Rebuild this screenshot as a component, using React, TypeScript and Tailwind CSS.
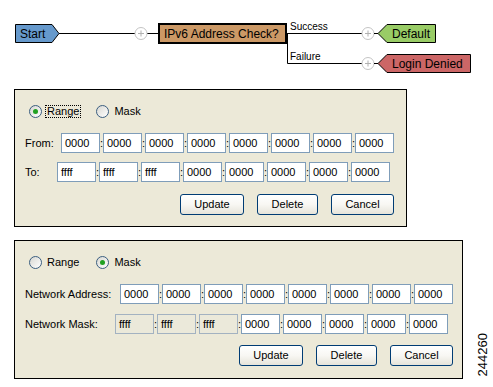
import React from "react";

const font = { fontFamily: '"Liberation Sans", Arial, sans-serif' };

function PlusCircle({ cx, cy }: { cx: number; cy: number }) {
    return (
        <g>
            <circle cx={cx} cy={cy} r={6} fill="white" stroke="#c4c4c4" strokeWidth={1} />
            <line x1={cx - 3} y1={cy} x2={cx + 3} y2={cy} stroke="#b0b0b0" strokeWidth={1} />
            <line x1={cx} y1={cy - 3} x2={cx} y2={cy + 3} stroke="#b0b0b0" strokeWidth={1} />
        </g>
    );
}

function Diagram() {
    return (
        <svg width="493" height="80" className="block" style={font}>
            <line x1={59} y1={33.5} x2={135} y2={33.5} stroke="black" />
            <line x1={147} y1={33.5} x2={158} y2={33.5} stroke="black" />
            <polygon points="15.5,24.5 52,24.5 59,33.5 52,42.5 15.5,42.5" fill="#6699cc" stroke="black" />
            <text x={20} y={38} fontSize={12} fill="black">Start</text>
            <PlusCircle cx={141} cy={33.5} />
            <rect x={159} y={24} width={127} height={19} fill="#cc9966" stroke="black" strokeWidth={2} />
            <text x={164} y={38} fontSize={12} fill="black">IPv6 Address Check?</text>
            <polyline points="287,33.5 362,33.5" fill="none" stroke="black" />
            <polyline points="287.5,33 287.5,63.5 362,63.5" fill="none" stroke="black" />
            <text x={290} y={30} fontSize={10} fill="black">Success</text>
            <text x={290} y={60} fontSize={10} fill="black">Failure</text>
            <PlusCircle cx={368} cy={33.5} />
            <PlusCircle cx={368} cy={63.5} />
            <line x1={374} y1={33.5} x2={378} y2={33.5} stroke="black" />
            <line x1={374} y1={63.5} x2={378} y2={63.5} stroke="black" />
            <polygon points="378,33.5 387,24.5 435.5,24.5 435.5,42.5 387,42.5" fill="#99cc66" stroke="black" />
            <text x={392} y={38} fontSize={12} fill="black">Default</text>
            <polygon points="378,63.5 387,54.5 470.5,54.5 470.5,72.5 387,72.5" fill="#cc6666" stroke="black" />
            <text x={392} y={68} fontSize={12} fill="black">Login Denied</text>
        </svg>
    );
}

function Radio({ label, checked, focused }: { label: string; checked?: boolean; focused?: boolean }) {
    return (
        <div className="flex items-center">
            <div className="w-[13px] h-[13px] rounded-full border border-[#3b5e80] bg-gradient-to-br from-[#d8d8d2] to-white flex items-center justify-center">
                {checked && <div className="w-[5px] h-[5px] rounded-full bg-[#21a121]" />}
            </div>
            <span
                className={
                    focused
                        ? "ml-[3px] px-[1px] leading-[11px] border border-dotted border-black text-[11px] text-black"
                        : "ml-[4px] leading-[11px] border border-transparent text-[11px] text-black"
                }
            >
                {label}
            </span>
        </div>
    );
}

function Octets({ values, disabled = 0 }: { values: string[]; disabled?: number }) {
    return (
        <div className="flex">
            {values.map((v, i) => (
                <div key={i} className="flex">
                    {i > 0 && (
                        <span className="w-[3px] text-[11px] leading-[20px] text-black flex justify-center">:</span>
                    )}
                    <div
                        className={
                            i < disabled
                                ? "w-[39px] h-[20px] border border-[#a3b2c1] bg-[#ebe9da] text-[11px] leading-[18px] pl-[3px] text-black"
                                : "w-[39px] h-[20px] border border-[#7f9db9] bg-white text-[11px] leading-[18px] pl-[3px] text-black"
                        }
                    >
                        {v}
                    </div>
                </div>
            ))}
        </div>
    );
}

function Btn({ label, w }: { label: string; w: string }) {
    return (
        <div
            className={`${w} h-[21px] rounded-[3px] border border-[#003c74] bg-gradient-to-b from-white via-[#f8f7f3] to-[#e6e4da] flex items-center justify-center text-[11px] text-black`}
        >
            {label}
        </div>
    );
}

function Buttons() {
    return (
        <div className="flex gap-[13px] justify-end">
            <Btn label="Update" w="w-[64px]" />
            <Btn label="Delete" w="w-[61px]" />
            <Btn label="Cancel" w="w-[63px]" />
        </div>
    );
}

const zeros = ["0000", "0000", "0000", "0000", "0000", "0000", "0000", "0000"];
const maskVals = ["ffff", "ffff", "ffff", "0000", "0000", "0000", "0000", "0000"];

export default function App() {
    return (
        <div className="w-[493px] h-[387px] bg-white overflow-hidden" style={font}>
            <Diagram />

            <div className="ml-[14px] mt-[9px] w-[393px] h-[138px] border border-black bg-[#ece9d8] flex flex-col pt-[15px] pl-[14px] pr-[12px]">
                <div className="flex items-center h-[13px]">
                    <Radio label="Range" checked focused />
                    <div className="ml-[15px]">
                        <Radio label="Mask" />
                    </div>
                </div>
                <div className="flex items-center mt-[15px] -ml-[4px]">
                    <span className="w-[37px] text-[11px] text-black">From:</span>
                    <Octets values={zeros} />
                </div>
                <div className="flex items-center mt-[9px] -ml-[4px]">
                    <span className="w-[32px] text-[11px] text-black">To:</span>
                    <Octets values={maskVals} />
                </div>
                <div className="mt-[12px]">
                    <Buttons />
                </div>
            </div>

            <div className="flex items-end mt-[13px]">
                <div className="ml-[14px] w-[449px] h-[139px] border border-black bg-[#ece9d8] flex flex-col pt-[15px] pl-[14px] pr-[9px]">
                    <div className="flex items-center h-[13px]">
                        <Radio label="Range" />
                        <div className="ml-[16px]">
                            <Radio label="Mask" checked />
                        </div>
                    </div>
                    <div className="flex items-center mt-[15px] -ml-[4px]">
                        <span className="w-[96px] text-[11px] text-black">Network Address:</span>
                        <Octets values={zeros} />
                    </div>
                    <div className="flex items-center mt-[10px] -ml-[4px]">
                        <span className="w-[90px] text-[11px] text-black">Network Mask:</span>
                        <Octets values={maskVals} disabled={3} />
                    </div>
                    <div className="mt-[11px]">
                        <Buttons />
                    </div>
                </div>
                <div className="ml-[13px] mb-[3px] text-[13px] leading-[13px] text-black [writing-mode:vertical-rl] rotate-180">
                    244260
                </div>
            </div>
        </div>
    );
}
